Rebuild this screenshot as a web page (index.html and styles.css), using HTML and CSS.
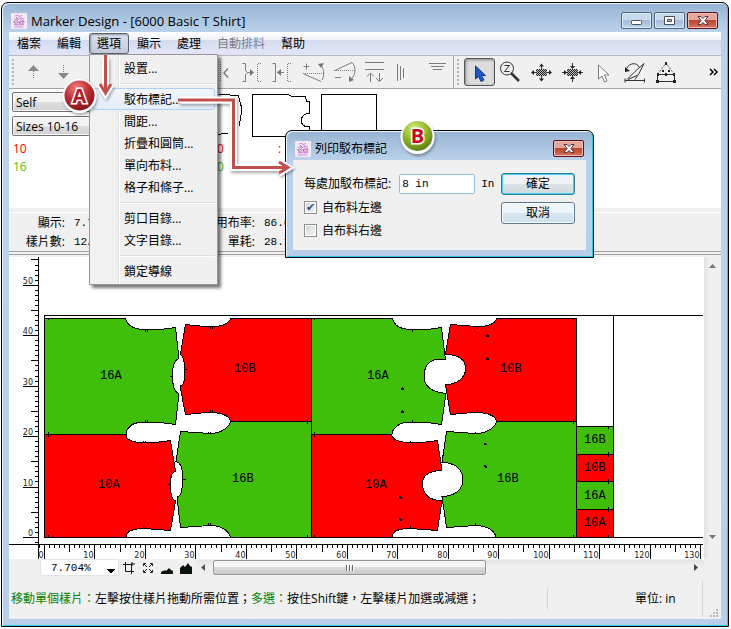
FILE: index.html
```
<!DOCTYPE html>
<html lang="zh-Hant">
<head>
<meta charset="utf-8">
<title>Marker Design - [6000 Basic T Shirt]</title>
<link rel="stylesheet" href="styles.css">
</head>
<body>
<svg class="defs" aria-hidden="true">
  <defs>
    <symbol id="app-logo" viewBox="0 0 16 16">
      <rect width="16" height="16" rx="1" fill="#f3e8f4"/>
      <path d="M4 3l3-1 1 2 3-2M3 6l4 1 2-2 4 1M2 9l3-1 2 2 3-2 4 1M3 12l3-1 2 1 3-1 2 1M6 5v8M10 4v9M3 14h9" fill="none" stroke="#d090d4"/>
      <path d="M3 8l2 4M8 8l1 3M12 7v5M5 4l2 2" fill="none" stroke="#a868b8"/>
    </symbol>
    <symbol id="close-x" viewBox="0 0 12 9">
      <path d="M1 .5h3L6 2.500 8 .5h3L8 4.500l3 4H8L6 6.500 4 8.500H1l3-4z" fill="#fff" stroke="#53323a"/>
    </symbol>
    <pattern id="hatch" width="2" height="2" patternUnits="userSpaceOnUse">
      <rect width="2" height="2" fill="#bbb"/><rect width="1" height="1" fill="#222"/><rect x="1" y="1" width="1" height="1" fill="#222"/>
    </pattern>
  </defs>
</svg>

<main class="window">
  <header class="titlebar">
    <svg class="logo"><use href="#app-logo"/></svg>
    <h1>Marker Design - [6000 Basic T Shirt]</h1>
    <div class="caption-buttons">
      <button aria-label="Minimize"><svg width="12" height="9"><rect x=".5" y="4.500" width="10" height="4" rx="1" fill="#fff" stroke="#46505c"/></svg></button>
      <button aria-label="Maximize"><svg width="12" height="9"><path d="M.5.5h10v8H.5zM3.500 3.500v2h4v-2z" fill="#fff" fill-rule="evenodd" stroke="#46505c"/></svg></button>
      <button class="close" aria-label="Close"><svg width="12" height="9"><use href="#close-x"/></svg></button>
    </div>
  </header>

  <div class="client">
    <nav class="menubar">
      <button>檔案</button>
      <button>編輯</button>
      <div class="menu-anchor">
        <button class="open" aria-expanded="true">選項</button>
        <ul class="menu">
          <li><button>設置...</button></li>
          <li class="rule"></li>
          <li><button class="current">駁布標記...</button></li>
          <li><button>間距...</button></li>
          <li><button>折疊和圓筒...</button></li>
          <li><button>單向布料...</button></li>
          <li><button>格子和條子...</button></li>
          <li class="rule"></li>
          <li><button>剪口目錄...</button></li>
          <li><button>文字目錄...</button></li>
          <li class="rule"></li>
          <li><button>鎖定導線</button></li>
        </ul>
      </div>
      <button>顯示</button>
      <button>處理</button>
      <button disabled>自動排料</button>
      <button>幫助</button>
    </nav>

    <div class="toolbar">
      <div class="tools edit-tools">
        <button aria-label="Up"><svg class="ic"><path d="M9 13h11l-5.500-6z" fill="#8a8a8a" stroke="none"/><path class="dot" d="M14.500 13v8"/></svg></button>
        <button aria-label="Down"><svg class="ic"><path d="M8 15h11l-5.500 6z" fill="#8a8a8a" stroke="none"/><path class="dot" d="M13.500 7v8"/></svg></button>
        <span class="gap"></span>
        <button aria-label="Flip"><svg class="ic"><path class="dot" d="M15.500 4v20"/><path d="M23 10.500l-4 4.500 4 4.500" stroke-width="1.500"/></svg></button>
        <button aria-label="Move right"><svg class="ic"><path d="M6.500 5.500h3v7l2 2-2 2v7h-3M11 14.500h6"/><path class="fill" d="M14 11l4 3.500-4 3.500z"/><path class="dot" d="M25 5.500h-3.500v18H25"/></svg></button>
        <button aria-label="Move left"><svg class="ic"><path d="M5.500 5.500h3v18h-3M10 14.500h7"/><path class="fill" d="M14 11l-4 3.500 4 3.500z"/><path class="dot" d="M24 5.500h-3.500v18H24"/></svg></button>
        <button aria-label="Rotate up"><svg class="ic"><path d="M5.500 8.500h6M8.500 5.500v6M6 16l17 7.500M24 22c2-3 3-9-1-15"/><path class="fill" d="M20 6l6-1-3 5z"/><path class="dot" d="M5 15.500h21"/></svg></button>
        <button aria-label="Rotate down"><svg class="ic"><path d="M6 19.500h6M6 12.500l17-8M23 4.500c4 4 4 11 0 16"/><path class="fill" d="M20 18v6l5-2z"/><path class="dot" d="M5 12.500h21"/></svg></button>
        <button aria-label="Align"><svg class="ic"><path d="M5 4.500h19M5 11.500h19M10.500 15v9M19.500 15v8"/><path d="M7 18.500l3.500-3.500 3.500 3.500M16 20l3.500 3.500L23 20"/></svg></button>
        <button aria-label="Vertical lines"><svg class="ic"><path d="M6.500 6v17M9.500 8v14M12.500 10v10"/></svg></button>
        <button aria-label="Horizontal lines"><svg class="ic"><path d="M7 5.500h17M9 8.500h13M11 11.500h9"/></svg></button>
      </div>
      <div class="tools select-tools">
        <button class="pressed" aria-label="Select"><svg class="ic"><path d="M11.500 8v13l3-2.500 2.500 5 3-1.500-2.500-4.500h4z" fill="#2457c5" stroke="#123a8c"/></svg></button>
        <button aria-label="Zoom"><svg class="ic dark"><circle cx="12" cy="10.500" r="6.500" fill="#eee"/><path d="M9.500 7.500h5l-5 6h5"/><path d="M16 15l8 8" stroke-width="2.500"/></svg></button>
        <button aria-label="Spread"><svg class="ic dark"><rect x="10" y="11" width="11" height="7" fill="url(#hatch)" stroke="none"/><path d="M15.500 11V6M15.500 18v5M10 14.500H6M21 14.500h4"/><path class="fill" d="M13 8.500l2.500-3 2.500 3zM13 20.500l2.500 3 2.500-3zM8 12l-3 2.500 3 2.500zM23 12l3 2.500-3 2.500z"/></svg></button>
        <button aria-label="Gather"><svg class="ic dark"><rect x="10" y="11" width="11" height="7" fill="url(#hatch)" stroke="none"/><path d="M15.500 10V5M15.500 18v6M10 14.500H5M21 14.500h5"/><path class="fill" d="M13 8l2.500 3 2.500-3zM13 21l2.500-3 2.500 3zM7 12l3 2.500-3 2.500zM24 12l-3 2.500 3 2.500z"/></svg></button>
        <button aria-label="Pointer"><svg class="ic"><path d="M10.500 7v14l3.500-3 2.500 6 2.500-1-2.500-6h4.500z" fill="#fff"/></svg></button>
        <button aria-label="Turn"><svg class="ic dark"><path d="M6 22.500h20M6 20.500v4M25.500 20.500v4M8 21.500l8-8 9-8-5 10-4 6M9 21.500l9-4M8 10c2-5 10-6 12-1"/><path class="fill" d="M6 9v5l5-1z"/></svg></button>
        <button aria-label="Shape"><svg class="ic dark"><path d="M7.500 16.500h17v7h-17z"/><path class="dot" d="M8 16l8-11 8 11"/><path class="fill" d="M7 15h2v3H7zM15 15h2v3h-2zM23 15h2v3h-2zM6 22h3v3H6zM23 22h3v3h-3zM15 4h2v3h-2zM12 12h2v2h-2zM18 12h2v2h-2z"/></svg></button>
      </div>
      <button class="more" aria-label="More"><svg width="10" height="8"><path d="M1 1l3 3-3 3M5 1l3 3-3 3" fill="none" stroke="#000" stroke-width="1.500"/></svg></button>
    </div>

    <section class="pieces">
      <div class="filters">
        <select aria-label="Fabric"><option>Self</option></select>
        <select aria-label="Sizes"><option>Sizes 10-16</option></select>
        <div class="size red"><span>10</span><span>0</span><span>:</span></div>
        <div class="size green"><span>16</span><span>0</span></div>
      </div>
      <svg class="thumbs" aria-hidden="true">
        <path d="M2.500 5.500h10l3 1h7l2 9q3 4 0 12l-1 10M2 46q5-2 10-1"/>
        <path d="M36.500 5.500h36l3 2h14l1 5h3v12q-8 0-8 7t8 6v6l-2 4H36.500z"/>
        <path d="M105.500 5.500h55v45h-55z"/>
      </svg>
    </section>

    <section class="stats">
      <span class="k">顯示:</span><span class="v">7.704%</span><span class="k">用布率:</span><span class="v">86.6</span>
      <span class="k">樣片數:</span><span class="v">12/12</span><span class="k">單耗:</span><span class="v">28.1</span>
    </section>

    <section class="workspace">
      <svg class="marker" role="img" aria-label="Marker">
        <g transform="translate(-9 -257)">
          <g class="outline">
            <path class="g" d="M44.500 318.500H125.500C127 325 134 329.500 146 329.500L160 329.500L175.500 327.500L179 358.500C174 360 172.500 366 172.500 376C172.500 386 174 392 179 393.500L175.500 424.500L160 422.500H140C131 423 126 429 126 434.500H44.500Z"/>
            <path class="r" d="M311.500 318.500H230.500C229 324 220 326.500 210 327L185.500 324.500L180.500 354.500C184 356 184.500 362 184.500 369C184.500 380 184.500 385 180 386L185.500 414.500L206 412.500C222 412 230 416 230.500 421.500H311.500Z"/>
            <path class="r" d="M44.500 434.500H126C126 440 134 442.500 144 442.500L155 442.500L170.500 440.500L175.500 471C172 472 170.500 476 170.500 483C170.500 496 172 500 175.500 501L170.500 530.500L144 528.500C132 528.500 126 532 126 537.500H44.500Z"/>
            <path class="g" d="M311.500 421.500H230.500C229 427 222 433.500 210 433.500L180.500 431.500L176 461.500C181 463 182.500 467 182.500 478C182.500 492 181 496 177 497L180.500 527.500L210 525.500C222 525.500 229 531 230.500 537.500H311.500Z"/>
            <path class="g" d="M311.500 318.500H392.500C394 325 400 329.500 412 329.500L427 329.500L441.500 327.500L445.500 359.500H436C428 361 424 368 424 376C424 386 431 392 446 393.500L441.500 424.500L427 422.500H407C398 423 392 429 392 434.500H311.500Z"/>
            <path class="r" d="M576.500 318.500H496.500C495 324 488 326.500 477 326.500L450.500 324.500L445.500 354.500C459 354.500 465.500 360 465.500 369C465.500 377 458 384.500 445.500 384.500L450.500 414.500L472 412.500C488 412 496 416 496.500 421.500H576.500Z"/>
            <path class="r" d="M311.500 434.500H391.500C393 440 400 442.500 410 442.500L422 442.500L437.500 440.500L442 470.500C428 471 422.500 476 422.500 483C422.500 494 428 500.500 442 500.500L437.500 530.500L410 528.500C398 528.500 392 532 392 537.500H311.500Z"/>
            <path class="g" d="M576.500 421.500H496.500C495 427 488 433.500 475 433.500L446.500 431.500L442 462.500C455 462.500 463 469 463 480C463 489 455 496.500 442 496.500L446.500 527.500L475 525.500C488 525.500 495 531 496 537.500H576.500Z"/>
            <path class="g" d="M576.500 426.500h37v28h-37z"/>
            <path class="r" d="M576.500 454.500h37v27h-37z"/>
            <path class="g" d="M576.500 481.500h37v28h-37z"/>
            <path class="r" d="M576.500 509.500h37v28h-37z"/>
            <path d="M44.500 537.500V315.500H703M613.500 315.500V537.500M44 537.500H703"/>
            <path d="M48.500 318v2M48.500 432v5M48.500 535v2M145.500 330v2M147.500 330v2M145.500 420v2M147.500 420v2M210.500 327v2M212.500 327v2M210.500 410v2M212.500 410v2M170 376.500h2M185 369.500h3M307.500 318v2M314.500 318v2M307.500 419v5M314.500 432v5M307.500 535v2M314.500 535v2M412.500 330v2M412.500 420v2M477.500 327v2M477.500 410v2M573.500 318v2M573.500 419v5M573.500 535v2M143.500 443v-2M145.500 443v-2M143.500 528v-2M145.500 528v-2M208.500 434v-2M210.500 434v-2M208.500 525v-2M210.500 525v-2M168 484.500h2M183 479.500h3M410.500 443v-2M410.500 528v-2M475.500 434v-2M475.500 525v-2M608.500 426v3M608.500 452v5M608.500 479v5M608.500 507v5M608.500 535v2"/>
            <path class="drill" d="M401 388h3v2h-3zM402 387h1v1h-1zM401 411h3v2h-3zM402 410h1v1h-1zM486 335h3v2h-3zM487 334h1v1h-1zM486 358h3v2h-3zM487 357h1v1h-1zM399 496h2v2h-2zM400 497h2v2h-2zM399 518h2v2h-2zM400 519h2v2h-2zM484 443h2v2h-2zM485 444h2v1h-2zM484 465h2v2h-2zM485 466h2v2h-2z"/>
          </g>
          <g class="names">
            <text x="100" y="379">16A</text><text x="234" y="372">10B</text>
            <text x="367" y="379">16A</text><text x="500" y="372">10B</text>
            <text x="98" y="488">10A</text><text x="232" y="482">16B</text>
            <text x="365" y="488">10A</text><text x="497" y="482">16B</text>
            <text x="584" y="443">16B</text><text x="584" y="471">10B</text>
            <text x="584" y="499">16A</text><text x="584" y="526">10A</text>
          </g>
          <g id="rulers" class="ruler"></g>
        </g>
      </svg>
      <div class="vscroll">
        <svg width="7" height="4"><path d="M0 4l3.500-4L7 4z" fill="#777"/></svg>
        <svg width="7" height="4"><path d="M0 0l3.500 4L7 0z" fill="#777"/></svg>
      </div>
    </section>

    <div class="viewbar">
      <select class="zoom" aria-label="Zoom level"><option>7.704%</option></select>
      <button aria-label="Zoom box"><svg width="12" height="12"><path d="M2.500 0v9.500H11M0 2.500h8.500V12M8 2h4M9 0v4" fill="none" stroke="#111"/></svg></button>
      <button aria-label="Fit"><svg width="12" height="12"><path d="M1.500 4V1.500H4M8 1.500h2.500V4M10.500 8v2.500H8M4 10.500H1.500V8M2 2l3 3M10 2L7 5M10 10L7 7M2 10l3-3" fill="none" stroke="#222"/></svg></button>
      <button aria-label="Small view"><svg width="12" height="12"><path d="M0 12v-2l4-2 1 1 3-3 2 2 2 1v3z" fill="#0a140a"/></svg></button>
      <button aria-label="Large view"><svg width="12" height="12"><path d="M0 12V6l3-3 2 2 3-4 2 3 2 1v7z" fill="#0a140a"/></svg></button>
      <div class="hscroll">
        <svg width="4" height="7"><path d="M4 0L0 3.500 4 7z" fill="#555"/></svg>
        <div class="thumb"><i></i><i></i><i></i></div>
        <svg class="end" width="4" height="7"><path d="M0 0l4 3.500L0 7z" fill="#444"/></svg>
      </div>
    </div>

    <footer class="status">
      <p><em>移動單個樣片：</em>左擊按住樣片拖動所需位置；<em>多選：</em>按住Shift鍵，左擊樣片加選或減選；</p>
      <span class="unit">單位: in</span>
      <svg class="grip" width="9" height="9"><path d="M6 0h2v2H6zM3 3h2v2H3zM6 3h2v2H6zM0 6h2v2H0zM3 6h2v2H3zM6 6h2v2H6z" fill="#b8b8b8"/></svg>
    </footer>
  </div>
</main>

<section class="dialog" role="dialog" aria-labelledby="dlg-title">
  <header>
    <svg class="logo"><use href="#app-logo"/></svg>
    <h2 id="dlg-title">列印駁布標記</h2>
    <button class="close" aria-label="Close"><svg width="12" height="9"><use href="#close-x"/></svg></button>
  </header>
  <form>
    <div class="fields">
      <div class="field"><label for="every">每處加駁布標記:</label><input id="every" type="text" value="8 in"><span>In</span></div>
      <label class="check"><input type="checkbox" checked>自布料左邊</label>
      <label class="check"><input type="checkbox">自布料右邊</label>
    </div>
    <div class="actions">
      <button type="button" class="default">確定</button>
      <button type="button">取消</button>
    </div>
  </form>
</section>

<svg class="callouts" aria-hidden="true">
  <defs>
    <radialGradient id="red-ball" cx=".4" cy=".25" r=".8"><stop offset="0" stop-color="#f08080"/><stop offset=".5" stop-color="#c03038"/><stop offset="1" stop-color="#7c1018"/></radialGradient>
    <radialGradient id="green-ball" cx=".4" cy=".25" r=".8"><stop offset="0" stop-color="#d4ee80"/><stop offset=".5" stop-color="#93b830"/><stop offset="1" stop-color="#557a10"/></radialGradient>
    <filter id="soft" x="-20%" y="-20%" width="150%" height="150%"><feDropShadow dx="1" dy="2" stdDeviation="1.500" flood-color="#000" flood-opacity=".35"/></filter>
  </defs>
  <g class="halo" filter="url(#soft)">
    <path d="M105.500 57v34M100 84l5.500 9 5.500-9"/>
    <path d="M179 100H233.500V167.500H284M279 162l9 5.500-9 5.500"/>
  </g>
  <g class="arrow">
    <path d="M105.500 55v36M100 84l5.500 9 5.500-9"/>
    <path d="M178 100H233.500V167.500H286M279 162l9 5.500-9 5.500"/>
  </g>
  <circle cx="79.500" cy="96" r="17" fill="#fff" filter="url(#soft)"/><circle cx="79.500" cy="95.500" r="15" fill="url(#red-ball)"/>
  <text x="79.500" y="103" class="letter a">A</text>
  <circle cx="417.500" cy="137" r="17" fill="#fff" filter="url(#soft)"/><circle cx="417.500" cy="136" r="15" fill="url(#green-ball)"/>
  <text x="417.500" y="143" class="letter b">B</text>
</svg>
<script src="rulers.js"></script>
</body>
</html>
```
FILE: styles.css
```
* { box-sizing: border-box; }
body {
  margin: 0;
  padding: 2px 2px 2px 1px;
  background: #fff;
  color: #000;
  font: 12px/18px "Open Sans", "Noto Sans CJK TC", sans-serif;
}
button, select, input { font: inherit; color: inherit; margin: 0; }
button { padding: 0; border: 0; background: none; }
svg { display: block; flex: none; }
h1, h2, p, ul { margin: 0; padding: 0; font-size: 12px; font-weight: 400; }
ul { list-style: none; }
.defs { position: absolute; width: 0; height: 0; }
.logo { width: 16px; height: 16px; }

.window {
  display: flex;
  flex-direction: column;
  min-height: calc(100vh - 4px);
  padding: 0 7px 7px;
}
.window, .dialog {
  border: 1px solid #000;
  border-radius: 7px 7px 0 0;
  background: linear-gradient(#98b4d2, #bcd2ec 30px, #b9cfe9);
  box-shadow: inset 1px 1px #eaf4fb, inset -1px -1px #2cc8e8;
}
.titlebar { display: flex; align-items: center; height: 29px; padding-top: 6px; gap: 4px; }
.titlebar .logo { margin-left: 2px; }
.titlebar h1 { flex: 1; font-size: 13px; }
.caption-buttons { display: flex; gap: 2px; align-self: flex-start; margin: 3px 3px 0 0; }
.caption-buttons button, .close {
  display: grid;
  place-items: center;
  width: 31px;
  height: 17px;
  border: 1px solid #52667e;
  border-radius: 2px;
  background: linear-gradient(#c8d9ec 48%, #a3bcd8 50%, #bfd5ec);
  box-shadow: inset 0 0 0 1px #dbe8f5;
}
.caption-buttons .close, .close {
  border-color: #5a1420;
  background: linear-gradient(#e5a79c 46%, #bd4330 50%, #d47460);
  box-shadow: inset 0 0 0 1px #eebbb0;
}

.client { flex: 1; display: flex; flex-direction: column; background: #f0f0f0; }
.menubar {
  display: flex;
  height: 23px;
  background: linear-gradient(#fff, #eef1f9 35%, #d5dbee 36%, #e0e4f6 85%);
}
.menubar > button { height: 23px; padding: 1px 8px 0; }
.menubar > button:disabled { color: #7c7f8a; }
.menu-anchor { position: relative; }
.menu-anchor > .open {
  height: 21px;
  margin: 1px 0;
  border: 1px solid #5b6270;
  border-radius: 3px;
  padding: 1px 7px 0;
  background: linear-gradient(#dde2ee, #c2c9da);
  box-shadow: inset 1px 1px 2px #8e95a5;
}
.menu {
  position: absolute;
  z-index: 2;
  top: 22px;
  left: 0;
  width: 129px;
  padding: 2px;
  border: 1px solid #979797;
  background: linear-gradient(90deg, #f1f1f1 28px, #e0e0e0 28px, #e0e0e0 29px, #fff 29px, #fff 30px, #f0f0f0 30px);
  box-shadow: 3px 3px 3px #0008;
}
.menu button {
  width: 100%;
  height: 22px;
  padding: 1px 0 0 31px;
  border: 1px solid transparent;
  border-radius: 3px;
  text-align: left;
}
.menu .current { border-color: #aecff7; background: linear-gradient(#f2f6fb, #e4edfa); }
.menu .rule { height: 9px; margin-left: 28px; border-top: 4px solid transparent; background: linear-gradient(#e0e0e0 1px, #fff 1px, #fff 2px, transparent 2px) padding-box; }

.toolbar {
  display: flex;
  align-items: center;
  height: 34px;
  border-top: 1px solid #b9bac0;
  border-bottom: 1px solid #a5a5a5;
  overflow: hidden;
}
.tools { display: flex; align-items: center; height: 32px; padding-left: 3px; }
.tools::before { content: ""; width: 2px; height: 26px; margin-right: 3px; border-left: 2px dotted #b4b4b4; }
.tools button { width: 31px; height: 28px; }
.gap { width: 124px; }
.select-tools { border-left: 1px solid #a8a8a8; }
.select-tools .pressed { border: 1px solid #565656; border-radius: 3px; background: #dcdcdc; box-shadow: inset 1px 1px 3px #888; }
.pressed .ic { margin: -1px; }
.ic { width: 31px; height: 28px; fill: none; stroke: #7c7c7c; overflow: visible; }
.ic.dark { stroke: #333; }
.ic .dot { stroke-dasharray: 1 1; }
.ic .fill { fill: #777; stroke: none; }
.ic.dark .fill { fill: #222; }
.more { margin: 0 2px 0 auto; }

.pieces { display: flex; height: 119px; background: #fff; }
.filters { width: 207px; padding: 3px; display: flex; flex-direction: column; }
.filters select {
  appearance: none;
  width: 190px;
  height: 20px;
  margin-bottom: 4px;
  padding: 1px 3px 0;
  border: 1px solid #707070;
  border-radius: 2px;
  background: linear-gradient(#f3f3f3 48%, #dedede 50%, #d2d2d2);
  box-shadow: inset 0 0 0 1px #fafafa;
}
.size { display: grid; grid-template-columns: 204px 61px 6px; margin-left: 1px; }
.red { color: #f00; }
.green { color: #3fbf0a; }
.thumbs { width: 163px; height: 50px; fill: none; stroke: #000; shape-rendering: crispEdges; }

.stats {
  display: grid;
  grid-template-columns: 56px 124px 48px 1fr;
  column-gap: 9px;
  height: 47px;
  padding-top: 2px;
  border-top: 4px solid #eee;
  border-bottom: 4px double #a0a0a0;
  box-shadow: inset 0 1px #fff;
}
.stats .k { text-align: right; }
.stats .v { font-family: "Liberation Mono", monospace; font-size: 11px; }

.workspace { display: grid; grid-template-columns: 1fr 17px; margin-top: 2px; }
.marker { width: 100%; height: 302px; background: #fff; }
.outline { fill: none; stroke: #000; shape-rendering: crispEdges; }
.g { fill: #3fbf0a; }
.r { fill: #f00; }
.names { font: 12px "Liberation Mono", monospace; }
.drill { fill: #000; stroke: none; }
.ruler { stroke: #000; fill: none; shape-rendering: crispEdges; }
.ruler text { stroke: none; fill: #222; font: 8px "DejaVu Sans", sans-serif; text-anchor: end; }
.vscroll {
  display: flex;
  flex-direction: column;
  align-items: center;
  justify-content: space-between;
  padding: 7px 0 20px;
  background: linear-gradient(90deg, #e2e2e2, #f0f0f0 6px);
}

.viewbar { display: flex; align-items: center; height: 17px; padding: 0 17px 0 31px; }
.zoom {
  appearance: none;
  width: 79px;
  height: 17px;
  padding: 0 0 0 10px;
  border: 1px solid #e2e3ea;
  border-radius: 2px;
  font: 11px "Liberation Mono", monospace;
  background: conic-gradient(from 315deg at 50% 100%, #000 90deg, transparent 90deg) 66px 9px / 8px 4px no-repeat, #fff;
}
.viewbar button { width: 19px; height: 17px; display: grid; place-items: center; }
.hscroll {
  flex: 1;
  display: flex;
  align-items: center;
  height: 15px;
  margin-left: 1px;
  padding: 0 6px 0 5px;
  background: linear-gradient(#e4e4e4, #efefef 40%);
}
.thumb {
  display: flex;
  align-items: center;
  justify-content: center;
  gap: 1px;
  width: 55%;
  height: 15px;
  margin-left: 8px;
  border: 1px solid #979797;
  border-radius: 2px;
  background: linear-gradient(#f5f5f5 45%, #dcdcdc 50%, #c8c8cc);
}
.thumb i { width: 2px; height: 6px; background: linear-gradient(90deg, #666 1px, #fff 1px); }
.hscroll .end { margin-left: auto; }

.status { flex: 1; display: flex; align-items: center; min-height: 43px; padding: 2px 0 0 2px; }
.status p { flex: 1; line-height: 20px; border-right: 1px solid #d4d4d4; }
.status em { font-style: normal; color: #008000; }
.unit { width: 155px; padding: 9px 0 9px 87px; border-right: 1px solid #d4d4d4; }
.grip { align-self: flex-end; margin: 0 2px 1px 7px; }

.dialog {
  position: absolute;
  left: 285px;
  top: 130px;
  width: 309px;
  padding: 0 7px 7px;
}
.dialog header { display: flex; align-items: center; gap: 4px; height: 29px; padding: 7px 2px 0; }
.dialog h2 { flex: 1; }
.dialog .close { align-self: flex-start; margin-top: 2px; }
.dialog form { display: flex; justify-content: space-between; padding: 13px 11px 10px; background: #f0f0f0; }
.fields { display: flex; flex-direction: column; gap: 4px; }
.field { display: flex; align-items: center; height: 21px; }
.field input {
  width: 76px;
  height: 20px;
  margin: 0 6px 0 8px;
  padding: 0 2px;
  border: 1px solid #8fbfe5;
  border-radius: 2px;
  background: #fff;
}
.field input, .field span { font: 11px "Liberation Mono", monospace; }
.check { display: flex; align-items: center; gap: 5px; height: 19px; }
.check input {
  appearance: none;
  width: 13px;
  height: 13px;
  border: 1px solid #8e8f8f;
  background: linear-gradient(135deg, #d0d4d8, #f6f6f6);
  box-shadow: inset 0 0 0 1px #fff;
}
.check input:checked::before { content: "✔"; display: block; color: #3a4f95; font: 11px/11px "DejaVu Sans", sans-serif; text-align: center; }
.actions { display: flex; flex-direction: column; gap: 7px; }
.actions button {
  width: 74px;
  height: 22px;
  border: 1px solid #5a7893;
  border-radius: 3px;
  background: linear-gradient(#eef5fa 48%, #d6e5ef 50%, #cfe2ee);
  box-shadow: inset 0 0 0 1px #fafcfe;
}
.actions .default { border-color: #2c8098; background: linear-gradient(#f0f3f5 48%, #dce3e7 50%, #d2dade); box-shadow: inset 0 0 0 1px #3fd0f4; }

.callouts { position: absolute; left: 0; top: 0; width: 620px; height: 300px; pointer-events: none; z-index: 5; }
.arrow { fill: none; stroke: #c0504d; stroke-width: 3px; }
.halo { fill: none; stroke: #fff; stroke-width: 7px; }
.letter { font: 700 20px "Open Sans", sans-serif; text-anchor: middle; stroke: #fff; stroke-width: 3px; paint-order: stroke; }
.letter.a { fill: #b01c24; }
.letter.b { fill: #c00d18; }
```
FILE: rulers.js
```
// Draws the horizontal and vertical inch rulers around the marker.
(function () {
  var NS = 'http://www.w3.org/2000/svg';
  var group = document.getElementById('rulers');
  var unit = 5.046;
  var originX = 44, originY = 537;
  var d = 'M9 544.5H703M38.5 257V559';

  function label(value, x, y) {
    var t = document.createElementNS(NS, 'text');
    t.setAttribute('x', x);
    t.setAttribute('y', y);
    t.textContent = value;
    group.appendChild(t);
  }

  for (var i = -1; i <= 130; i++) {
    var x = Math.round(originX + i * unit) + 0.5;
    var len = i % 10 === 0 ? 14 : i % 5 === 0 ? 7 : 3;
    d += 'M' + x + ' 545v' + len;
    if (i % 10 === 0) label(i, x - 1, 558);
  }
  for (var j = -1; j <= 55; j++) {
    var y = Math.round(originY - j * unit) + 0.5;
    var w = j % 10 === 0 ? 15 : j % 5 === 0 ? 7 : 3;
    d += 'M38 ' + y + 'h-' + w;
    if (j % 10 === 0) label(j, 33, y - 2);
  }
  var path = document.createElementNS(NS, 'path');
  path.setAttribute('d', d);
  group.appendChild(path);
})();
```
